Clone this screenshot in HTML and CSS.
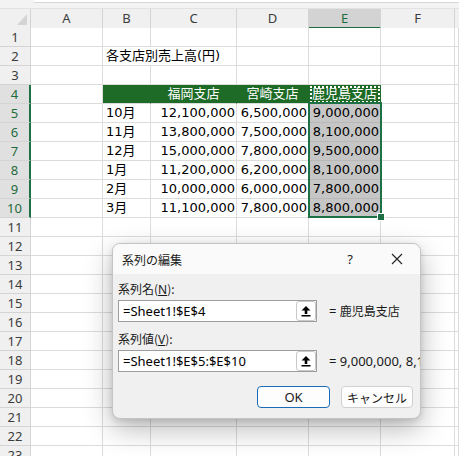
FILE: index.html
```html
<!DOCTYPE html>
<html lang="ja">
<head>
<meta charset="utf-8">
<link rel="stylesheet" href="styles.css">
</head>
<body>
<div class="app">
  <div class="topstrip"><div class="fbar"></div></div>
  <div class="sheet">
    <div class="row colhead">
      <div class="hd corner"><svg width="31" height="19" viewBox="0 0 31 19"><polygon points="17,16 27,16 27,5" fill="#d4d4d4"/></svg></div>
      <div class="hd">A</div><div class="hd">B</div><div class="hd">C</div><div class="hd">D</div><div class="hd sel">E</div><div class="hd">F</div><div class="hd last"></div>
    </div>
    <div class="row"><div class="rh">1</div><div class="c"></div><div class="c"></div><div class="c"></div><div class="c"></div><div class="c"></div><div class="c"></div><div class="c"></div></div>
    <div class="row"><div class="rh">2</div><div class="c"></div><div class="c span2">各支店別売上高(円)</div><div class="c"></div><div class="c"></div><div class="c"></div><div class="c"></div></div>
    <div class="row"><div class="rh">3</div><div class="c"></div><div class="c"></div><div class="c"></div><div class="c"></div><div class="c"></div><div class="c"></div><div class="c"></div></div>
    <div class="row"><div class="rh rsel">4</div><div class="c"></div><div class="c g"></div><div class="c g ctr">福岡支店</div><div class="c g ctr">宮崎支店</div><div class="c g ctr ants">鹿児島支店</div><div class="c"></div><div class="c"></div></div>
    <div class="row"><div class="rh rsel">5</div><div class="c"></div><div class="c">10月</div><div class="c num">12,100,000</div><div class="c num">6,500,000</div><div class="c num gs">9,000,000</div><div class="c"></div><div class="c"></div></div>
    <div class="row"><div class="rh rsel">6</div><div class="c"></div><div class="c">11月</div><div class="c num">13,800,000</div><div class="c num">7,500,000</div><div class="c num gs">8,100,000</div><div class="c"></div><div class="c"></div></div>
    <div class="row"><div class="rh rsel">7</div><div class="c"></div><div class="c">12月</div><div class="c num">15,000,000</div><div class="c num">7,800,000</div><div class="c num gs">9,500,000</div><div class="c"></div><div class="c"></div></div>
    <div class="row"><div class="rh rsel">8</div><div class="c"></div><div class="c">1月</div><div class="c num">11,200,000</div><div class="c num">6,200,000</div><div class="c num gs">8,100,000</div><div class="c"></div><div class="c"></div></div>
    <div class="row"><div class="rh rsel">9</div><div class="c"></div><div class="c">2月</div><div class="c num">10,000,000</div><div class="c num">6,000,000</div><div class="c num gs">7,800,000</div><div class="c"></div><div class="c"></div></div>
    <div class="row"><div class="rh rsel">10</div><div class="c"></div><div class="c">3月</div><div class="c num">11,100,000</div><div class="c num">7,800,000</div><div class="c num gs">8,800,000</div><div class="c"></div><div class="c"></div></div>
    <div class="row"><div class="rh">11</div><div class="c"></div><div class="c"></div><div class="c"></div><div class="c"></div><div class="c"></div><div class="c"></div><div class="c"></div></div>
    <div class="row"><div class="rh">12</div><div class="c"></div><div class="c"></div><div class="c"></div><div class="c"></div><div class="c"></div><div class="c"></div><div class="c"></div></div>
    <div class="row"><div class="rh">13</div><div class="c"></div><div class="c"></div><div class="c"></div><div class="c"></div><div class="c"></div><div class="c"></div><div class="c"></div></div>
    <div class="row"><div class="rh">14</div><div class="c"></div><div class="c"></div><div class="c"></div><div class="c"></div><div class="c"></div><div class="c"></div><div class="c"></div></div>
    <div class="row"><div class="rh">15</div><div class="c"></div><div class="c"></div><div class="c"></div><div class="c"></div><div class="c"></div><div class="c"></div><div class="c"></div></div>
    <div class="row"><div class="rh">16</div><div class="c"></div><div class="c"></div><div class="c"></div><div class="c"></div><div class="c"></div><div class="c"></div><div class="c"></div></div>
    <div class="row"><div class="rh">17</div><div class="c"></div><div class="c"></div><div class="c"></div><div class="c"></div><div class="c"></div><div class="c"></div><div class="c"></div></div>
    <div class="row"><div class="rh">18</div><div class="c"></div><div class="c"></div><div class="c"></div><div class="c"></div><div class="c"></div><div class="c"></div><div class="c"></div></div>
    <div class="row"><div class="rh">19</div><div class="c"></div><div class="c"></div><div class="c"></div><div class="c"></div><div class="c"></div><div class="c"></div><div class="c"></div></div>
    <div class="row"><div class="rh">20</div><div class="c"></div><div class="c"></div><div class="c"></div><div class="c"></div><div class="c"></div><div class="c"></div><div class="c"></div></div>
    <div class="row"><div class="rh">21</div><div class="c"></div><div class="c"></div><div class="c"></div><div class="c"></div><div class="c"></div><div class="c"></div><div class="c"></div></div>
    <div class="row"><div class="rh">22</div><div class="c"></div><div class="c"></div><div class="c"></div><div class="c"></div><div class="c"></div><div class="c"></div><div class="c"></div></div>
    <div class="row"><div class="rh">23</div><div class="c"></div><div class="c"></div><div class="c"></div><div class="c"></div><div class="c"></div><div class="c"></div><div class="c"></div></div>
  </div>

  <div class="selbox"><div class="handle"></div></div>

  <div class="dialog">
    <div class="dtitle">
      <span class="dname">系列の編集</span>
      <span class="help">?</span>
      <svg class="close" width="12" height="12" viewBox="0 0 12 12"><path d="M1 1 L11 11 M11 1 L1 11" stroke="#222" stroke-width="1.1" fill="none"/></svg>
    </div>
    <div class="dbody">
      <div class="lbl">系列名(<u>N</u>):</div>
      <div class="frow">
        <div class="tbox"><span class="tval">=Sheet1!$E$4</span><span class="ref"><svg width="12" height="12" viewBox="0 0 12 12"><path d="M6 1 L10.5 5.5 H7.3 V9 H4.7 V5.5 H1.5 Z" fill="#000"/><rect x="1.5" y="10" width="9" height="1.5" fill="#000"/></svg></span></div>
        <div class="preview">= <span class="jp">鹿児島支店</span></div>
      </div>
      <div class="lbl lbl2">系列値(<u>V</u>):</div>
      <div class="frow">
        <div class="tbox"><span class="tval">=Sheet1!$E$5:$E$10</span><span class="ref"><svg width="12" height="12" viewBox="0 0 12 12"><path d="M6 1 L10.5 5.5 H7.3 V9 H4.7 V5.5 H1.5 Z" fill="#000"/><rect x="1.5" y="10" width="9" height="1.5" fill="#000"/></svg></span></div>
        <div class="preview">= 9,000,000, 8,100,000, 9,500,000</div>
      </div>
      <div class="btns">
        <div class="btn ok">OK</div>
        <div class="btn"><span class="jp">キャンセル</span></div>
      </div>
    </div>
  </div>
</div>
</body>
</html>
```

FILE: styles.css
```css
html, body {
  margin: 0;
  padding: 0;
  background: #ffffff;
}
.app {
  position: relative;
  width: 459px;
  height: 456px;
  overflow: hidden;
  font-family: "DejaVu Sans", "Noto Sans CJK JP", sans-serif;
  font-size: 13px;
  color: #000;
}
.topstrip {
  height: 9px;
  background: #f3f3f3;
  box-sizing: border-box;
  border-bottom: 1px solid #e2e2e2;
  padding-left: 34px;
}
.fbar {
  height: 2px;
  background: #ffffff;
  border-bottom: 1px solid #d6d6d6;
}
.sheet {
  display: flex;
  flex-direction: column;
}
.row {
  display: grid;
  grid-template-columns: 31px 72px 48px 86px 72px 72px 74px 4px;
  height: 19px;
}
.c {
  box-sizing: border-box;
  border-right: 1px solid #dcdcdc;
  border-bottom: 1px solid #dcdcdc;
  line-height: 18px;
  padding-left: 3px;
  white-space: nowrap;
  overflow: hidden;
  background: #fff;
}
.span2 {
  grid-column: span 2;
}
.num {
  text-align: right;
  padding-left: 0;
  padding-right: 1px;
}
.ctr {
  text-align: center;
  padding-left: 0;
}
.g {
  background: #1e6b27;
  color: #fff;
  border-color: #1e6b27;
  border-bottom-color: #dcdcdc;
}
.ants {
  position: relative;
}
.ants::after {
  content: "";
  position: absolute;
  left: 1px;
  top: 1px;
  right: 0;
  bottom: 0;
  border: 2px dotted #ffffff;
}
.gs {
  background: #c6c6c6;
  border-color: #b8b8b8;
}
.hd, .rh {
  box-sizing: border-box;
  background: #f0f0f0;
  border-right: 1px solid #d4d4d4;
  border-bottom: 1px solid #d4d4d4;
  font-family: "Noto Sans", sans-serif;
  font-size: 13px;
  color: #3c3c3c;
  text-align: center;
  line-height: 18px;
}
.corner {
  padding: 0;
  line-height: 0;
}
.hd.sel {
  background: #d3d3d3;
  color: #1e6b3c;
  border-bottom: 2px solid #1e6b3c;
}
.hd.last {
  border-right: none;
}
.rh.rsel {
  background: #e0e0e0;
  color: #1e6b3c;
  border-right: 2px solid #1e7145;
}
.selbox {
  position: absolute;
  left: 308px;
  top: 102px;
  width: 74px;
  height: 116px;
  box-sizing: border-box;
  border: 2px solid #1e7145;
}
.handle {
  position: absolute;
  right: -5px;
  bottom: -5px;
  width: 6px;
  height: 6px;
  background: #1e7145;
  border: 1px solid #fff;
}
.dialog {
  position: absolute;
  left: 112px;
  top: 243px;
  width: 309px;
  height: 176px;
  box-sizing: border-box;
  border: 1px solid #c4c4c4;
  border-radius: 8px;
  background: #f0f0f0;
  box-shadow: 0 10px 28px rgba(0, 0, 0, 0.28), 0 2px 6px rgba(0, 0, 0, 0.12);
  overflow: hidden;
  font-family: "Noto Sans", "Noto Sans CJK JP", sans-serif;
  font-size: 12px;
  color: #1a1a1a;
}
.dtitle {
  height: 30px;
  background: #fafafa;
  display: flex;
  align-items: center;
  padding-left: 9px;
  padding-right: 17px;
  font-family: "Noto Sans CJK JP", sans-serif;
}
.dname {
  flex: 1;
}
.help {
  width: 16px;
  text-align: center;
  font-family: "Noto Sans", sans-serif;
  font-size: 13px;
  margin-right: 33px;
}
.dbody {
  padding: 7px 0 0 5px;
}
.lbl {
  height: 16px;
  line-height: 16px;
  font-size: 12px;
  font-family: "Noto Sans CJK JP", sans-serif;
  margin-bottom: 3px;
}
.lbl u {
  font-family: "Noto Sans", sans-serif;
}
.lbl2 {
  margin-top: 9px;
}
.frow {
  display: flex;
  align-items: center;
  white-space: nowrap;
}
.tbox {
  width: 199px;
  height: 22px;
  box-sizing: border-box;
  border: 1px solid #9d9d9d;
  background: #fff;
  display: flex;
  align-items: center;
  flex-shrink: 0;
}
.tval {
  flex: 1;
  padding-left: 4px;
  font-size: 13px;
  font-family: "Noto Sans", sans-serif;
  color: #000;
}
.ref {
  width: 20px;
  height: 20px;
  box-sizing: border-box;
  border: 1px solid #c9c9c9;
  border-radius: 3px;
  background: #fff;
  display: flex;
  align-items: center;
  justify-content: center;
  margin-right: 0;
}
.preview {
  margin-left: 12px;
  font-size: 13px;
  font-family: "Noto Sans", sans-serif;
}
.jp {
  font-family: "Noto Sans CJK JP", sans-serif;
  font-size: 12px;
}
.btns {
  display: flex;
  justify-content: flex-end;
  gap: 11px;
  margin-top: 14px;
  padding-right: 7px;
}
.btn {
  width: 72px;
  height: 22px;
  box-sizing: border-box;
  border: 1px solid #d0d0d0;
  border-radius: 4px;
  background: #fdfdfd;
  display: flex;
  align-items: center;
  justify-content: center;
  font-size: 13px;
}
.btn.ok {
  width: 73px;
  border: 1.5px solid #1a6cb8;
}
```
